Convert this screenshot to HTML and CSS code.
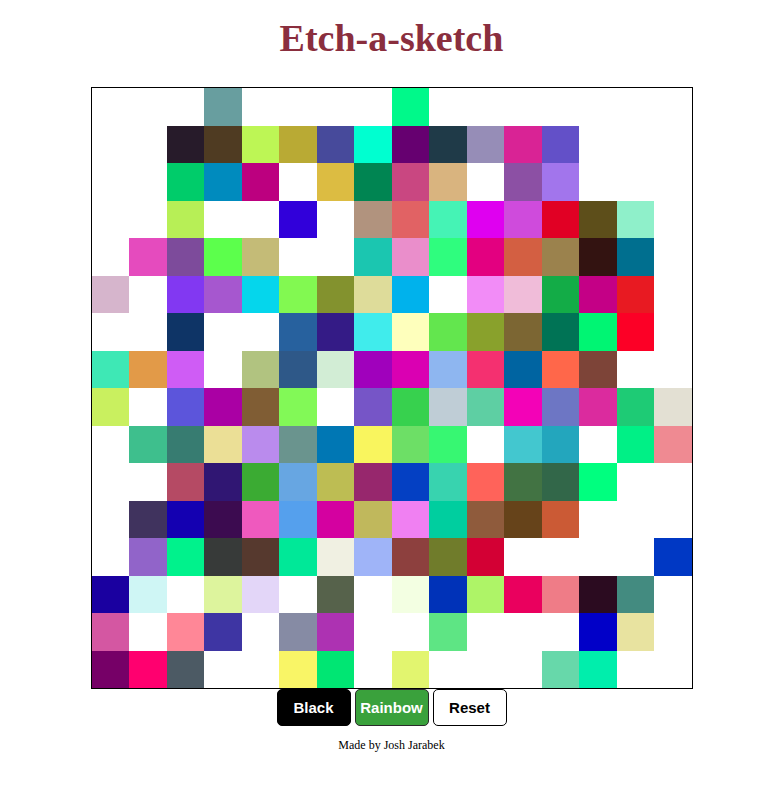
FILE: index.html
```html
<!DOCTYPE html>
<html lang="en">
<head>
<meta charset="utf-8">
<title>Etch-a-sketch</title>
<link rel="stylesheet" href="styles.css">
</head>
<body>
<h1 class="title">Etch-a-sketch</h1>
<div class="grid" id="grid"></div>
<div class="controls">
  <button class="btn btn-black">Black</button>
  <button class="btn btn-rainbow">Rainbow</button>
  <button class="btn btn-reset">Reset</button>
</div>
<p class="footer">Made by Josh Jarabek</p>
<script src="script.js"></script>
</body>
</html>
```

FILE: styles.css
```css
body {
  margin: 0;
  font-family: "Liberation Serif", "Times New Roman", serif;
  text-align: center;
  background: #fff;
}

.title {
  font-size: 38px;
  line-height: 44px;
  font-weight: bold;
  color: #8a2e3e;
  margin: 16px 0 27px;
}

.grid {
  width: 600px;
  height: 600px;
  border: 1px solid #000;
  margin: 0 auto;
  display: grid;
  grid-template-columns: repeat(16, 1fr);
  grid-template-rows: repeat(16, 1fr);
  background: #fff;
}

.cell {
  background: #fff;
}

.controls {
  display: flex;
  justify-content: center;
  gap: 4px;
}

.btn {
  width: 74px;
  height: 37px;
  padding: 0;
  font-family: "Liberation Sans", Arial, sans-serif;
  font-weight: bold;
  font-size: 15px;
  border-radius: 5px;
  border: 1px solid #000;
  cursor: pointer;
}

.btn-black {
  background: #000;
  color: #fff;
}

.btn-rainbow {
  background: #3aa13c;
  color: #fff;
  border-color: #2a2a2a;
}

.btn-reset {
  background: #fff;
  color: #000;
}

.footer {
  font-size: 12px;
  margin: 12px 0 0;
}
```

FILE: script.js
```js
const W = null;
const rows = [
  [W,W,W,"689e9f",W,W,W,W,"00f98a",W,W,W,W,W,W,W],
  [W,W,"271b2a","4f3b22","bdf655","b9aa34","474a9b","00ffd0","660070","1f3a48","968db7","d92395","6350c8",W,W,W],
  [W,W,"00cc6a","008bbe","bc007f",W,"dcbc42","008552","c94781","d9b47f",W,"8c50a4","a275ec",W,W,W],
  [W,W,"b7ef56",W,W,"3100da",W,"b1937e","e16264","45f3b5","df00f0","cf4bdc","e10024","5d4e1a","8ff0ca",W],
  [W,"e54bbe","7d4b9b","5cff4c","c4bb77",W,W,"1bc6b0","ea8ecb","2ffd7e","e30080","d35f42","9b824d","331311","006f8f",W],
  ["d6b5cc",W,"8238f2","a657cf","05d6ec","82f951","83922e","dedc9a","00b2ec",W,"f28cf7","f0bcd9","13ac47","c40086","e81a22",W],
  [W,W,"0e3466",W,W,"27619e","341b86","40ecec","feffbc","63e64e","89a12c","7c6633","007355","00f573","fc0026",W],
  ["3ee8b5","e29a48","cf5cf5",W,"b1c380","2e5888","d2edd5","a001bc","da00b2","8eb6f0","f43070","0064a1","ff674a","7d4438",W,W],
  ["c9f05f",W,"5c55db","aa00a4","805d34","82f957",W,"7655c7","37d14e","bfcdd6","5ecfa3","f302b7","6d76c4","db2b9e","1ecb75","e3e0d3"],
  [W,"3ebf8d","377c71","ebdf96","ba8bed","6a948e","0077b4","f9f55e","6ddf66","37f772",W,"43c7cf","23a6bd",W,"00f086","ef8a92"],
  [W,W,"b54a64","301673","3bab33","67a6e2","bdbd53","97276d","0440c3","38d3af","ff635a","427343","326749","00ff7f",W,W],
  [W,"40335e","1400b1","3c0b50","ef59be","55a0ed","d401a0","c0b85c","f080f2","00ce9f","8f5b3c","66431a","cb5a35",W,W,W],
  [W,"9164c9","00f28c","373a39","56392e","00e898","f0f0e2","9fb4f8","8d403e","707c2b","d30034",W,W,W,W,"0038c4"],
  ["1a00a0","cff6f5",W,"ddf49d","e3d6f8",W,"56624b",W,"f3ffe2","0032b8","aef467","ea005e","ef7c87","2b0b20","438b80",W],
  ["d457a2",W,"ff8797","3e35a3",W,"868ba4","ad32b2",W,W,"5ee584",W,W,W,"0100c8","e8e3a0",W],
  ["760067","ff006f","4c5a64",W,W,"f9f566","00e673",W,"e2f56f",W,W,W,"67d8aa","00eeac",W,W]
];
const grid = document.getElementById("grid");
rows.forEach(function (row) {
  row.forEach(function (c) {
    const d = document.createElement("div");
    d.className = "cell";
    if (c) d.style.backgroundColor = "#" + c;
    grid.appendChild(d);
  });
});
```
